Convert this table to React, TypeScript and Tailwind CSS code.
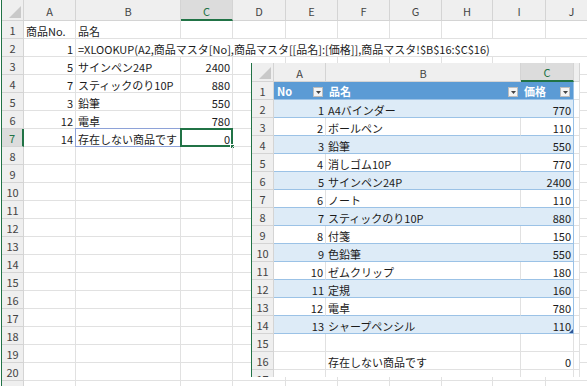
import type { ReactNode } from 'react';

type Align = 'left' | 'right';

interface CellProps {
  children?: ReactNode;
  align?: Align;
  className?: string;
}

const backLetters = ['A', 'B', 'C', 'D', 'E', 'F', 'G', 'H', 'I', 'J'];

const orderRows: [number, string, number][] = [
  [5, 'サインペン24P', 2400],
  [7, 'スティックのり10P', 880],
  [3, '鉛筆', 550],
  [12, '電卓', 780],
];

const products: [number, string, number][] = [
  [1, 'A4バインダー', 770],
  [2, 'ボールペン', 110],
  [3, '鉛筆', 550],
  [4, '消しゴム10P', 770],
  [5, 'サインペン24P', 2400],
  [6, 'ノート', 110],
  [7, 'スティックのり10P', 880],
  [8, '付箋', 150],
  [9, '色鉛筆', 550],
  [10, 'ゼムクリップ', 180],
  [11, '定規', 160],
  [12, '電卓', 780],
  [13, 'シャープペンシル', 110],
];

function SelectAll() {
  return (
    <div className="flex items-end justify-end border-r border-b border-[#d4d4d4] bg-[#efefef] pr-[2px] pb-[2px]">
      <svg width="12" height="12" viewBox="0 0 12 12">
        <polygon points="12,0 12,12 0,12" fill="#c9c9c9" />
      </svg>
    </div>
  );
}

function ColHead({ label, active, pad }: { label: string; active?: boolean; pad: string }) {
  const base = `flex items-center justify-center border-r border-[#d4d4d4] text-[11px] ${pad}`;
  return active ? (
    <div className={`${base} border-b-2 border-b-[#217346] bg-[#dcdcdc] text-[#217346]`}>{label}</div>
  ) : (
    <div className={`${base} border-b border-b-[#d4d4d4] bg-[#efefef] text-[#444]`}>{label}</div>
  );
}

function RowHead({ n, active }: { n?: number; active?: boolean }) {
  return active ? (
    <div className="flex items-center justify-center border-r-2 border-b border-r-[#217346] border-b-[#d4d4d4] bg-[#dcdcdc] pt-[2px] text-[11px] text-[#217346]">
      {n}
    </div>
  ) : (
    <div className="flex items-center justify-center border-r border-b border-[#d4d4d4] bg-[#efefef] pt-[2px] text-[11px] text-[#444]">
      {n}
    </div>
  );
}

function Cell({ children, align = 'left', className = '' }: CellProps) {
  return (
    <div
      className={`relative whitespace-nowrap border-r border-b border-[#e1e1e1] px-[2px] text-[11px] leading-[21px] text-[#1b1b1b] ${
        align === 'right' ? 'text-right' : 'text-left'
      } ${className}`}
    >
      {children}
    </div>
  );
}

function FilterButton() {
  return (
    <span className="flex h-[10px] w-[10px] items-center justify-center border border-[#bdbdbd] bg-[#f4f4f4]">
      <svg width="5" height="3" viewBox="0 0 5 3">
        <polygon points="0,0 5,0 2.5,3" fill="#444" />
      </svg>
    </span>
  );
}

function OrderSheet() {
  const empty = Array.from({ length: 13 }, (_, i) => i + 8);
  return (
    <div className="grid grid-cols-[22px_52px_105px_52px_53px_52px_52px_52px_51px_53px_52px] grid-rows-[21px] auto-rows-[18px]">
      <SelectAll />
      {backLetters.map((l) => (
        <ColHead key={l} label={l} active={l === 'C'} pad="pt-[3px]" />
      ))}

      <RowHead n={1} />
      <Cell>商品No.</Cell>
      <Cell>品名</Cell>
      {backLetters.slice(2).map((l) => (
        <Cell key={l} />
      ))}

      <RowHead n={2} />
      <Cell align="right">1</Cell>
      <Cell className="col-span-9">
        =XLOOKUP(A2,商品マスタ[No],商品マスタ[[品名]:[価格]],商品マスタ!$B$16:$C$16)
      </Cell>

      {orderRows.map(([no, name, price], i) => (
        <div key={no} className="contents">
          <RowHead n={i + 3} />
          <Cell align="right">{no}</Cell>
          <Cell>{name}</Cell>
          <Cell align="right">{price}</Cell>
          {backLetters.slice(3).map((l) => (
            <Cell key={l} />
          ))}
        </div>
      ))}

      <RowHead n={7} active />
      <Cell align="right">14</Cell>
      <Cell>
        存在しない商品です
        <span className="absolute -top-px -bottom-px -left-px -right-px border border-[#8ea2d8]" />
      </Cell>
      <Cell align="right">
        0
        <span className="absolute -top-px -bottom-px -left-px -right-px border-2 border-[#217346]" />
        <span className="absolute -right-[3px] -bottom-[3px] h-[5px] w-[5px] border border-white bg-[#217346]" />
      </Cell>
      {backLetters.slice(3).map((l) => (
        <Cell key={l} />
      ))}

      {empty.map((n) => (
        <div key={n} className="contents">
          <RowHead n={n} />
          {backLetters.map((l) => (
            <Cell key={l} />
          ))}
        </div>
      ))}

      {/* row 21 only peeks in under the bottom edge */}
      <RowHead />
      {backLetters.map((l) => (
        <Cell key={l} />
      ))}
    </div>
  );
}

function TableCell({ children, align = 'left', className = '' }: CellProps) {
  return (
    <div
      className={`relative whitespace-nowrap px-[2px] text-[11px] leading-[20px] text-[#1b1b1b] ${
        align === 'right' ? 'text-right' : 'text-left'
      } ${className}`}
    >
      {children}
    </div>
  );
}

function MasterWindow() {
  return (
    <div className="absolute top-[63px] left-[251px] h-[314px] w-[329px] overflow-hidden border-l border-[#217346] bg-white">
      <div className="grid grid-cols-[22px_52px_195px_53px_6px] grid-rows-[19px] auto-rows-[18px]">
        <SelectAll />
        <ColHead label="A" pad="pt-[2px]" />
        <ColHead label="B" pad="pt-[2px]" />
        <ColHead label="C" active pad="pt-[2px]" />
        <ColHead label="" pad="pt-[2px]" />

        {/* table header */}
        <RowHead n={1} />
        {[
          ['No', ''],
          ['品名', ''],
          ['価格', 'border-r border-r-[#9bc2e6]'],
        ].map(([label, extra]) => (
          <div
            key={label}
            className={`flex items-center justify-between border-b border-[#9bc2e6] bg-[#5b9bd5] pr-[3px] pl-[3px] text-[11px] font-bold text-white ${extra}`}
          >
            <span className="pt-[1px]">{label}</span>
            <span className="mt-[3px]">
              <FilterButton />
            </span>
          </div>
        ))}
        <Cell />

        {products.map(([no, name, price], i) => {
          const band = i % 2 === 0;
          const line = band
            ? 'bg-[#ddebf7] border-b border-b-[#9bc2e6]'
            : 'bg-white border-b border-b-[#9bc2e6] border-r border-r-[#e1e1e1]';
          const last = i === products.length - 1;
          return (
            <div key={no} className="contents">
              <RowHead n={i + 2} />
              <TableCell align="right" className={line}>
                {no}
              </TableCell>
              <TableCell className={line}>{name}</TableCell>
              <TableCell
                align="right"
                className={`border-r border-b border-r-[#9bc2e6] border-b-[#9bc2e6] ${band ? 'bg-[#ddebf7]' : 'bg-white'}`}
              >
                {price}
                {last && (
                  <svg className="absolute right-0 bottom-0" width="4" height="4" viewBox="0 0 4 4">
                    <polygon points="4,0 4,4 0,4" fill="#2f5597" />
                  </svg>
                )}
              </TableCell>
              <Cell />
            </div>
          );
        })}

        <RowHead n={15} />
        <Cell />
        <Cell />
        <Cell />
        <Cell />

        <RowHead n={16} />
        <Cell />
        <TableCell className="border-r border-b border-[#e1e1e1]">存在しない商品です</TableCell>
        <TableCell align="right" className="border-r border-b border-[#e1e1e1]">
          0
        </TableCell>
        <Cell />

        <RowHead n={17} />
        <Cell />
        <Cell />
        <Cell />
        <Cell />
      </div>
    </div>
  );
}

export default function App() {
  return (
    <div className="relative h-[386px] w-[587px] overflow-hidden bg-white font-['Noto_Sans_CJK_JP','Liberation_Sans',sans-serif]">
      <div className="ml-px border-l border-[#217346]">
        <OrderSheet />
      </div>
      <MasterWindow />
    </div>
  );
}
